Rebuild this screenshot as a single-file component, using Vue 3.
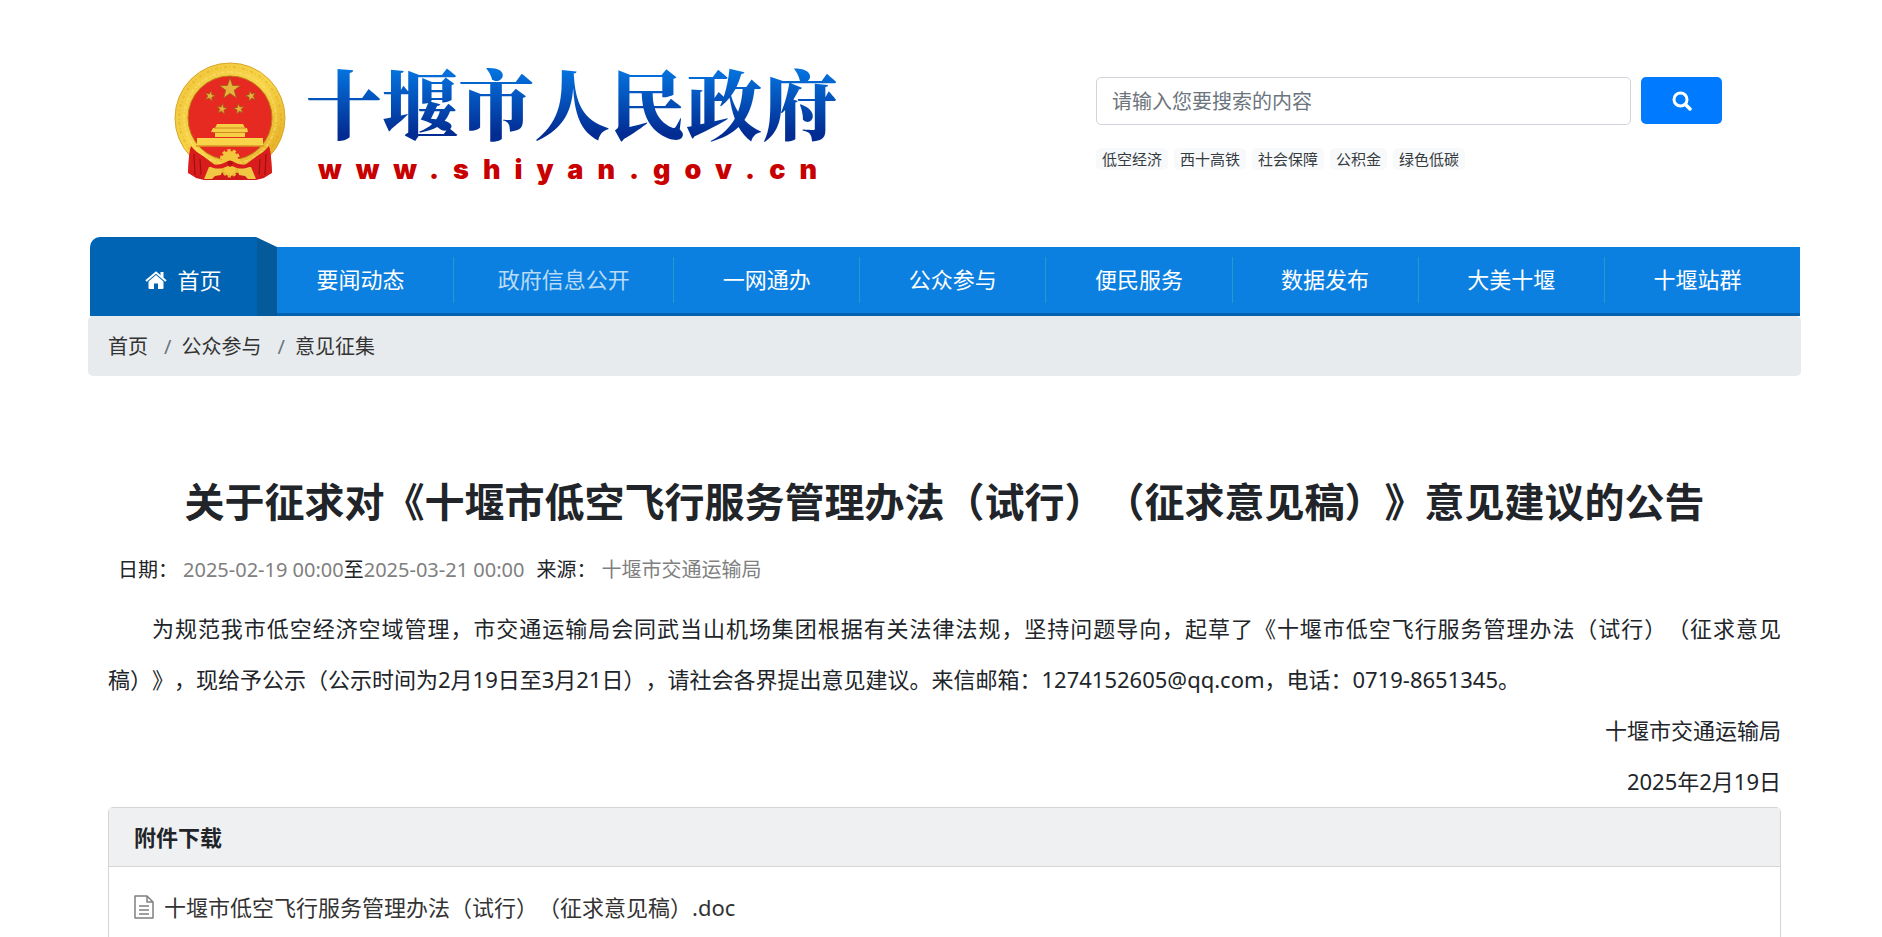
<script setup>
import { ref } from 'vue'

const keyword = ref('')
const hotWords = ['低空经济', '西十高铁', '社会保障', '公积金', '绿色低碳']
const navItems = [
    { name: '要闻动态' },
    { name: '政府信息公开', wide: true },
    { name: '一网通办' },
    { name: '公众参与' },
    { name: '便民服务' },
    { name: '数据发布' },
    { name: '大美十堰' },
    { name: '十堰站群' },
]
const crumbs = ['首页', '公众参与', '意见征集']

// five-pointed star around cx, cy
function star(cx, cy, r, turn = 0) {
    const points = []
    for (let i = 0; i < 10; i++) {
        const radius = i % 2 ? r * 0.4 : r
        const angle = (i * 36 - 90 + turn) * Math.PI / 180
        points.push((cx + radius * Math.cos(angle)).toFixed(2) + ',' + (cy + radius * Math.sin(angle)).toFixed(2))
    }
    return points.join(' ')
}

const stars = [
    star(56, 27, 11),
    star(36, 34, 5.5, 15),
    star(77, 34, 5.5, -15),
    star(48, 47, 5.5, 10),
    star(65, 47, 5.5, -10),
]
</script>

<template>
    <div class="page">
        <header class="header">
            <a class="logo" href="#" aria-label="十堰市人民政府">
                <svg class="emblem" viewBox="0 0 112 119" aria-hidden="true">
                    <defs>
                        <linearGradient id="gold" x1="0" y1="0" x2="1" y2="1">
                            <stop offset="0" stop-color="#f0c53c" />
                            <stop offset="0.5" stop-color="#f8d548" />
                            <stop offset="1" stop-color="#e0a51e" />
                        </linearGradient>
                    </defs>
                    <path d="M16 84h80l2 26-8 6-8 2H30l-8-2-8-6z" fill="#cf191b" />
                    <circle cx="56" cy="56" r="55" fill="url(#gold)" stroke="#d9a62c" stroke-width="1" />
                    <circle cx="56" cy="56" r="51" fill="none" stroke="#d9a11f" stroke-width="2" stroke-dasharray="3 2 1 3" opacity="0.4" />
                    <circle cx="56" cy="56" r="46" fill="none" stroke="#fbe680" stroke-width="2" stroke-dasharray="4 2 2 1" opacity="0.5" />
                    <circle cx="56" cy="56" r="42" fill="#e62a22" stroke="#b97c18" stroke-width="1" />
                    <polygon v-for="s in stars" :key="s" :points="s" fill="#e3b33c" stroke="#9c5a14" stroke-width="0.7" />
                    <path d="M43 62h26l2 4h2l1 4h-3v5H41v-5h-4l2-4h2z" fill="#f6cf45" />
                    <path d="M40 66h32M39 70.500h34" stroke="#c9781d" stroke-width="0.8" />
                    <path d="M23 76h66v8H23z" fill="#f9d44a" />
                    <path d="M22 84h68" stroke="#d89624" stroke-width="1.500" />
                    <path d="M17 84c-3 9-2 19-3 27l7 4 4-2 5 4 5-1 6-13-12-9c-5-3-9-6-12-10z" fill="#d81d1c" />
                    <path d="M95 84c3 9 2 19 3 27l-7 4-4-2-5 4-5-1-6-13 12-9c5-3 9-6 12-10z" fill="#d81d1c" />
                    <path d="M20 92l1 21M26 97l1 16M92 92l-1 21M86 97l-1 16" stroke="#9f1014" stroke-width="1.200" fill="none" />
                    <path d="M30 117l5-12h14l-2 8-6 1-3 3zM82 117l-5-12H63l2 8 6 1 3 3z" fill="#f0c844" />
                    <circle cx="56" cy="97" r="8" fill="#f3c63e" stroke="#f3c63e" stroke-width="4" stroke-dasharray="3 2" />
                    <circle cx="56" cy="107" r="7" fill="#f3c63e" stroke="#e9b935" stroke-width="3" stroke-dasharray="3 2" />
                    <path d="M29 98c8 5 14 6 21 3l4-2h4l4 2c7 3 13 2 21-3-4 7-12 10-20 8l-5-2-2 1-2-1-5 2c-8 2-16-1-20-8z" fill="#d81d1c" />
                    <circle cx="56" cy="101" r="2.500" fill="#b51216" />
                </svg>
                <span class="logo-text">
                    <span class="site-name">十堰市人民政府</span>
                    <span class="site-url">www.shiyan.gov.cn</span>
                </span>
            </a>
            <div class="search">
                <form class="search-form" @submit.prevent>
                    <input v-model="keyword" type="text" placeholder="请输入您要搜索的内容" aria-label="请输入您要搜索的内容">
                    <button type="submit" aria-label="搜索">
                        <svg viewBox="0 0 20 20" aria-hidden="true">
                            <circle cx="8.500" cy="8.500" r="6.500" fill="none" stroke="#fff" stroke-width="3" />
                            <path d="M13.500 13.500l4.500 4.500" stroke="#fff" stroke-width="3.500" stroke-linecap="round" />
                        </svg>
                    </button>
                </form>
                <div class="hot-words">
                    <a v-for="word in hotWords" :key="word" href="#">{{ word }}</a>
                </div>
            </div>
        </header>

        <nav class="nav">
            <a class="nav-home" href="#">
                <svg viewBox="0 0 22 18" aria-hidden="true">
                    <path d="M11 4l7.500 6.500V17a1 1 0 0 1-1 1H13v-5.500H9V18H4.500a1 1 0 0 1-1-1v-6.500z" fill="#fff" />
                    <path d="M1 10L11 1.500 21 10" fill="none" stroke="#fff" stroke-width="2" />
                    <path d="M15.500 1h3v6l-3-2.500z" fill="#fff" />
                </svg>
                首页
            </a>
            <a v-for="item in navItems" :key="item.name" class="nav-item" :class="{ wide: item.wide }" href="#">
                {{ item.name }}
            </a>
        </nav>

        <ol class="breadcrumb">
            <li v-for="crumb in crumbs" :key="crumb"><a href="#">{{ crumb }}</a></li>
        </ol>

        <main class="article">
            <h1>关于征求对《十堰市低空飞行服务管理办法（试行）（征求意见稿）》意见建议的公告</h1>
            <div class="meta">
                <span>日期：</span>
                <span class="period"><time>2025-02-19 00:00</time>至<time>2025-03-21 00:00</time></span>
                <span>来源：</span>
                <span class="source">十堰市交通运输局</span>
            </div>
            <div class="content">
                <p class="indent">为规范我市低空经济空域管理，市交通运输局会同武当山机场集团根据有关法律法规，坚持问题导向，起草了《十堰市低空飞行服务管理办法（试行）（征求意见稿）》，现给予公示（公示时间为2月19日至3月21日），请社会各界提出意见建议。来信邮箱：1274152605@qq.com，电话：0719-8651345。</p>
                <p class="sign">十堰市交通运输局</p>
                <p class="sign">2025年2月19日</p>
            </div>
            <section class="card">
                <h2 class="card-header">附件下载</h2>
                <div class="card-body">
                    <a class="file" href="#">
                        <svg viewBox="0 0 20 24" aria-hidden="true">
                            <path d="M1 1h12l6 6v16H1zM13 1v6h6M5 11h10M5 15h10M5 19h10" fill="none" stroke="#808080" stroke-width="1.500" stroke-linejoin="round" />
                        </svg>
                        十堰市低空飞行服务管理办法（试行）（征求意见稿）.doc
                    </a>
                </div>
            </section>
        </main>
    </div>
</template>

<style>
body {
    margin: 0;
    background: #fff;
}
</style>

<style scoped>
.page {
    padding: 0 81px 0 88px;
    color: #212529;
    font-family: "Noto Sans", "Noto Sans CJK SC", sans-serif;
    font-size: 20px;
    line-height: 30px;
    text-spacing-trim: space-all;
}

a {
    color: inherit;
    text-decoration: none;
}

.header {
    display: flex;
    justify-content: space-between;
    align-items: flex-start;
    height: 175px;
    padding: 62px 79px 0 86px;
}

.logo {
    display: flex;
    gap: 20px;
}

.emblem {
    width: 112px;
    height: 119px;
}

.logo-text {
    display: flex;
    flex-direction: column;
}

.site-name {
    font-family: "Noto Serif CJK SC", "Noto Sans CJK SC", sans-serif;
    font-size: 76px;
    font-weight: 900;
    line-height: 80px;
    color: transparent;
    background: linear-gradient(#0573de 10%, #022c92 90%);
    background-clip: text;
}

.site-url {
    margin-top: 12px;
    padding-left: 12px;
    color: #c80000;
    font-family: Inter, "Liberation Sans", sans-serif;
    font-size: 27px;
    font-weight: 900;
    line-height: 32px;
    letter-spacing: 14px;
}

.search {
    width: 626px;
    padding-top: 15px;
}

.search-form {
    display: flex;
    gap: 10px;
}

.search-form input {
    flex: 1;
    min-width: 0;
    height: 48px;
    padding: 1px 15px 0;
    box-sizing: border-box;
    border: 1px solid #ced4da;
    border-radius: 5px;
    font: inherit;
}

.search-form input::placeholder {
    color: #6c757d;
    opacity: 1;
}

.search-form button {
    display: flex;
    align-items: center;
    justify-content: center;
    width: 81px;
    height: 47px;
    border: 0;
    border-radius: 5px;
    background: #007bff;
}

.search-form button svg {
    width: 20px;
    height: 20px;
}

.hot-words {
    display: flex;
    gap: 6px;
    margin-top: 23px;
}

.hot-words a {
    padding: 0 6px;
    border-radius: 5px;
    background: #f8f9fa;
    color: #343a40;
    font-size: 15px;
    line-height: 22px;
}

.nav {
    display: flex;
    align-items: flex-end;
    margin: 0 1px 0 2px;
    padding-right: 10px;
    background: linear-gradient(#0c80e1, #0c80e1) 0 10px no-repeat;
    color: #fff;
    font-size: 22px;
    box-shadow: inset 0 -3px #0461b0;
}

.nav-home {
    display: flex;
    align-items: center;
    justify-content: center;
    gap: 10px;
    box-sizing: border-box;
    width: 187px;
    height: 79px;
    margin-right: -9px;
    padding-top: 6px;
    border-top-left-radius: 10px;
    background: linear-gradient(to right, #0064b4 calc(100% - 20px), #055a9c calc(100% - 20px));
    clip-path: polygon(0 0, 166px 0, 100% 10px, 100% 100%, 0 100%);
}

.nav-home svg {
    width: 22px;
    height: 18px;
}

.nav-item {
    flex: 186;
    margin-bottom: 13px;
    padding-bottom: 2px;
    text-align: center;
    line-height: 44px;
    border-right: 1px solid #1f9fc8;
}

.nav-item.wide {
    flex: 220;
    color: #b9dbf6;
}

.nav-item:last-child {
    border-right: 0;
}

.breadcrumb {
    display: flex;
    margin: 0;
    padding: 16px 20px 14px;
    border-radius: 5px;
    background: #e7ebee;
    color: #333;
    list-style: none;
}

.breadcrumb li + li::before {
    content: "/";
    padding: 0 10px 0 16px;
    color: #6c757d;
}

.article {
    padding: 94px 20px 0;
}

h1 {
    margin: 0;
    font-size: 40px;
    font-weight: bold;
    line-height: 64px;
    text-align: center;
}

.meta {
    display: flex;
    margin: 21px 10px 18px;
}

.meta .period {
    margin: 0 12px 0 5px;
}

.meta .source {
    margin-left: 5px;
}

.meta time,
.meta .source {
    color: #808080;
}

.content {
    font-size: 22px;
    line-height: 51px;
}

.content p {
    margin: 0;
}

.content .indent {
    text-indent: 2em;
    text-align: justify;
}

.content .sign {
    text-align: right;
}

.card {
    border: 1px solid #d3d5d7;
    border-radius: 5px;
    font-size: 22px;
}

.card-header {
    margin: 0;
    padding: 14px 25px;
    border-bottom: 1px solid #d3d5d7;
    background: #eff0f2;
    font-size: 22px;
    font-weight: bold;
}

.card-body {
    padding: 25px;
}

.file {
    display: flex;
    align-items: center;
    gap: 10px;
    color: #333;
}

.file svg {
    width: 20px;
    height: 24px;
}
</style>
